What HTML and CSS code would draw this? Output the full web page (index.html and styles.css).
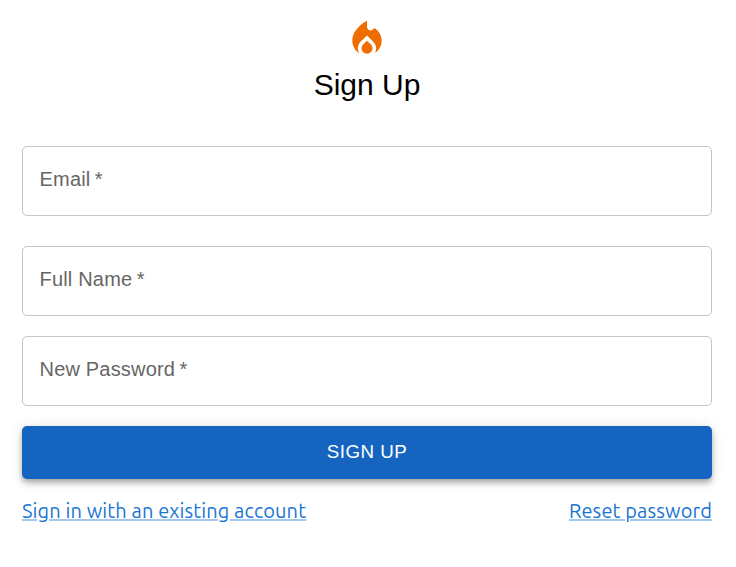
FILE: index.html
```html
<!DOCTYPE html>
<html lang="en">
<head>
<meta charset="utf-8">
<title>Sign Up</title>
<link rel="stylesheet" href="styles.css">
</head>
<body>
<main class="page">
  <svg class="logo" viewBox="0 0 24 24" aria-hidden="true"><path d="M12 12.9l-2.13 2.09c-.56.56-.87 1.29-.87 2.07C9 18.68 10.35 20 12 20s3-1.32 3-2.94c0-.78-.31-1.52-.87-2.07L12 12.9z"/><path d="M16 6l-.44.55C14.38 8.02 12 7.19 12 5.3V2S4 6 4 13c0 2.92 1.56 5.47 3.89 6.86-.56-.79-.89-1.76-.89-2.8 0-1.32.52-2.56 1.47-3.5L12 10.1l3.53 3.47c.95.93 1.47 2.17 1.47 3.5 0 1.02-.31 1.96-.85 2.75 1.89-1.15 3.29-3.06 3.71-5.3.66-3.55-1.07-6.9-3.86-8.52z"/></svg>
  <h1 class="title">Sign Up</h1>
  <form class="form">
    <div class="field field-email">Email<span class="required">*</span></div>
    <div class="field">Full Name<span class="required">*</span></div>
    <div class="field">New Password<span class="required">*</span></div>
    <button class="submit" type="button">SIGN UP</button>
  </form>
  <nav class="links">
    <a class="link link-signin" href="#">Sign in with an existing account</a>
    <a class="link link-reset" href="#">Reset password</a>
  </nav>
</main>
</body>
</html>
```
FILE: styles.css
```css
* { box-sizing: border-box; }
body { margin: 0; background: #fff; font-family: "Liberation Sans", Arial, sans-serif; }
.page { display: flex; flex-direction: column; align-items: center; padding: 17px 24px 0 22px; }
.logo { width: 44px; height: 44px; fill: #ef6c00; }
.title { margin: 4px 0 0; font-size: 30px; font-weight: 400; line-height: 40px; }
.form { display: flex; flex-direction: column; gap: 20px; width: 100%; margin-top: 41px; }
.field { display: flex; align-items: center; gap: 4.4px; height: 70px; padding: 0 17px 4px 16.5px; border: 1px solid #c4c4c4; border-radius: 5px; color: #666; font-size: 20px; letter-spacing: 0.19px; }
.field-email { margin-bottom: 10px; }
.submit { height: 53px; padding: 0 0 2px; border: 0; border-radius: 5px; background: #1565c0; color: #fff; font-family: inherit; font-size: 18.75px; letter-spacing: 0.5px; box-shadow: 0 2.5px 5px -1.25px rgba(0,0,0,.2), 0 5px 6.25px rgba(0,0,0,.14), 0 1.25px 12.5px rgba(0,0,0,.12); }
.links { display: flex; justify-content: space-between; width: 100%; margin-top: 18px; font-family: Ubuntu, "Noto Sans", sans-serif; font-size: 20px; line-height: 28px; letter-spacing: 0.12px; }
.link { color: #1976d2; text-decoration-color: rgba(25,118,210,.4); }
```
